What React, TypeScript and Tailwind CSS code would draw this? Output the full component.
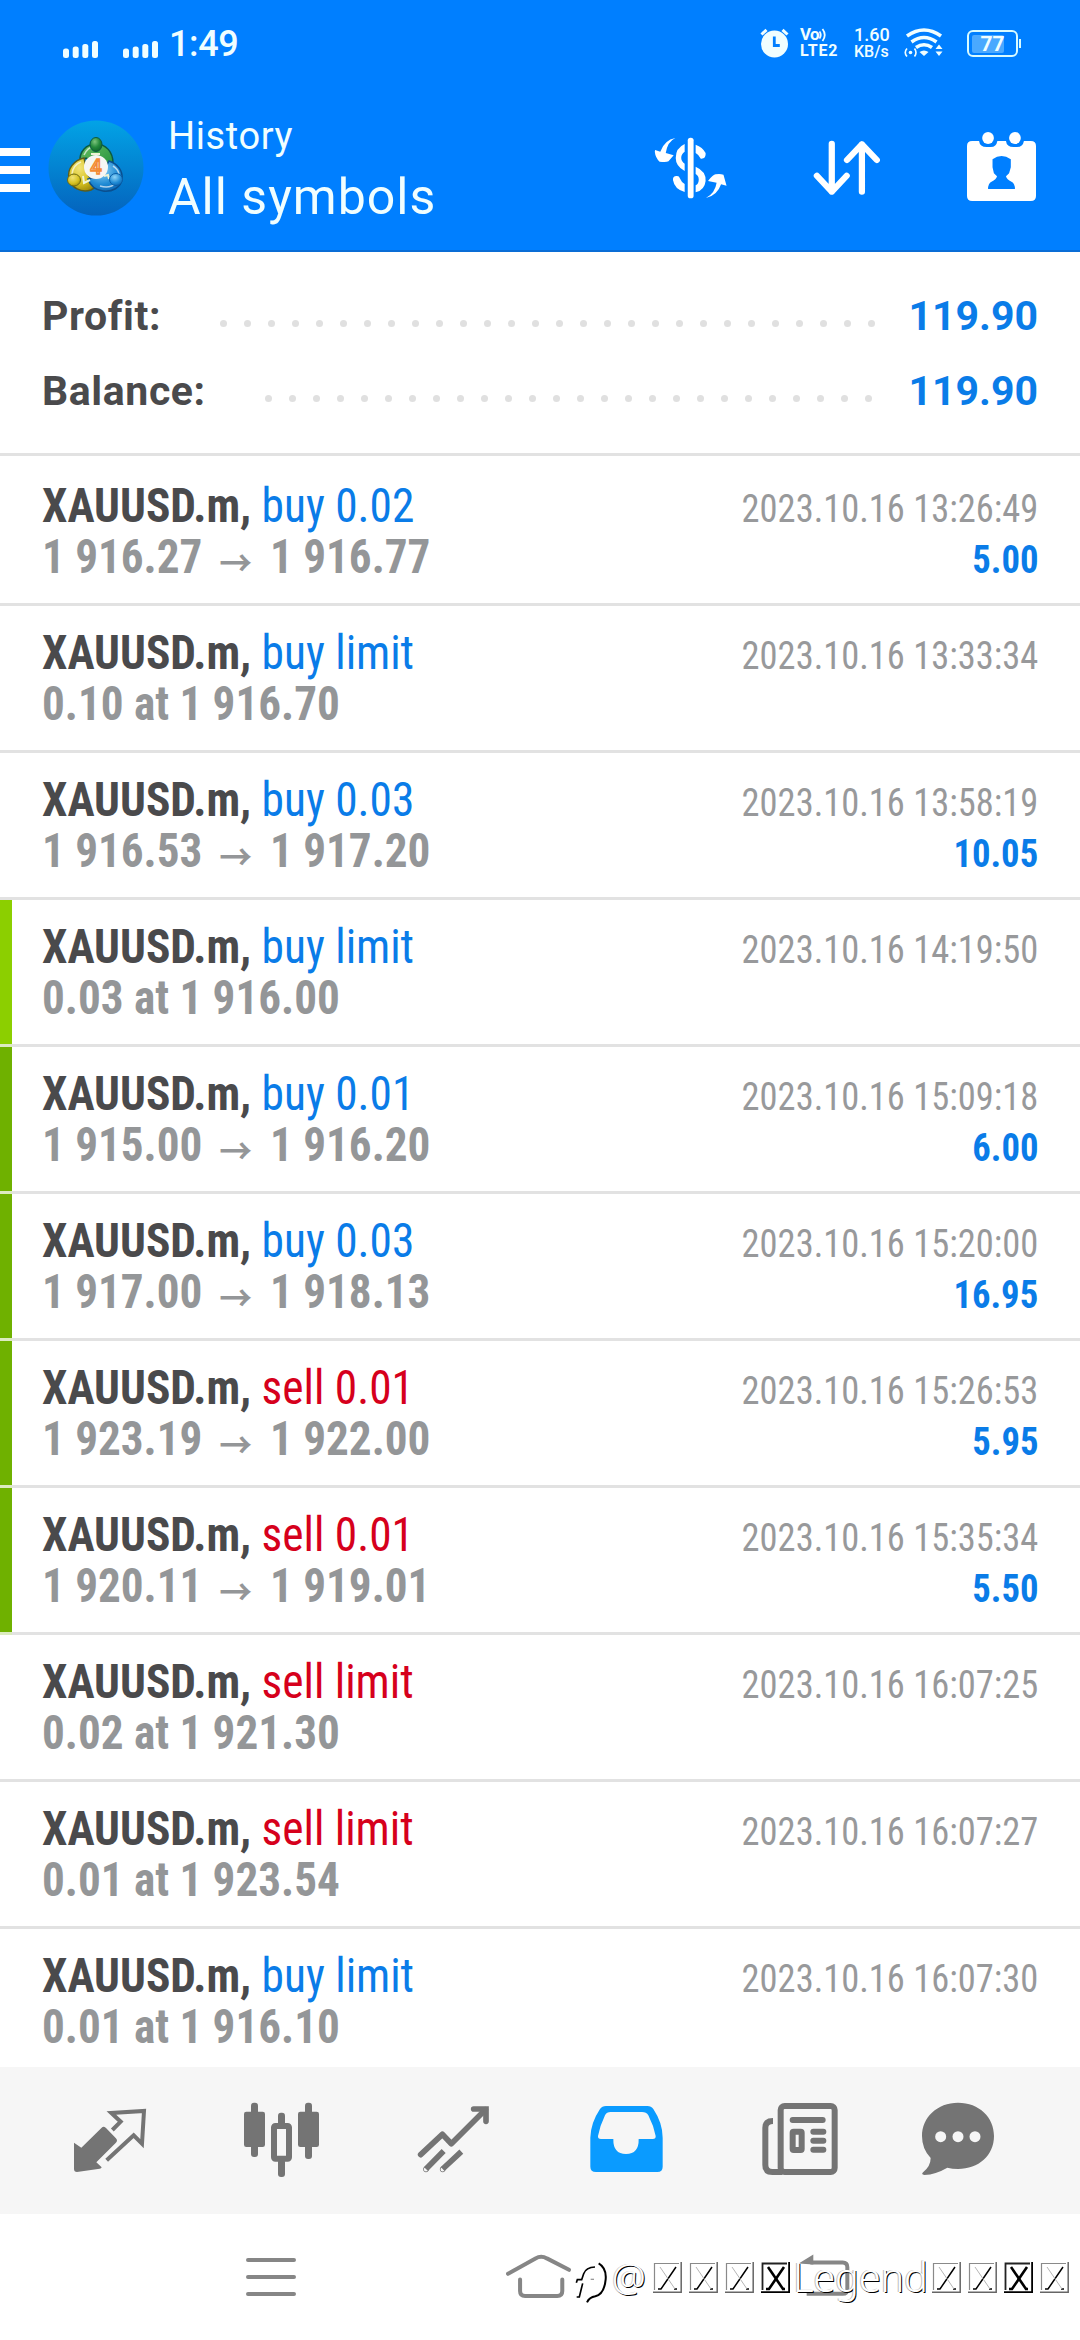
import type { ReactNode } from "react";

type Deal = {
    side: "buy" | "sell";
    volume: string;
    open?: string;
    close?: string;
    order?: string;
    time: string;
    profit?: string;
    bar?: "light" | "dark";
};

const DEALS: Deal[] = [
    { side: "buy", volume: "0.02", open: "1 916.27", close: "1 916.77", time: "2023.10.16 13:26:49", profit: "5.00" },
    { side: "buy", volume: "limit", order: "0.10 at 1 916.70", time: "2023.10.16 13:33:34" },
    { side: "buy", volume: "0.03", open: "1 916.53", close: "1 917.20", time: "2023.10.16 13:58:19", profit: "10.05" },
    { side: "buy", volume: "limit", order: "0.03 at 1 916.00", time: "2023.10.16 14:19:50", bar: "light" },
    { side: "buy", volume: "0.01", open: "1 915.00", close: "1 916.20", time: "2023.10.16 15:09:18", profit: "6.00", bar: "dark" },
    { side: "buy", volume: "0.03", open: "1 917.00", close: "1 918.13", time: "2023.10.16 15:20:00", profit: "16.95", bar: "dark" },
    { side: "sell", volume: "0.01", open: "1 923.19", close: "1 922.00", time: "2023.10.16 15:26:53", profit: "5.95", bar: "dark" },
    { side: "sell", volume: "0.01", open: "1 920.11", close: "1 919.01", time: "2023.10.16 15:35:34", profit: "5.50", bar: "dark" },
    { side: "sell", volume: "limit", order: "0.02 at 1 921.30", time: "2023.10.16 16:07:25" },
    { side: "sell", volume: "limit", order: "0.01 at 1 923.54", time: "2023.10.16 16:07:27" },
    { side: "buy", volume: "limit", order: "0.01 at 1 916.10", time: "2023.10.16 16:07:30" },
];

const Signal = () => (
    <svg viewBox="0 0 36 17" className="h-[17px] w-[36px]" fill="#f0feff">
        <rect x="0" y="7.5" width="6" height="9.5" rx="2.5" />
        <rect x="9.7" y="5.5" width="6" height="11.5" rx="2.5" />
        <rect x="19.3" y="3" width="6" height="14" rx="2.5" />
        <rect x="29" y="0" width="6" height="17" rx="2.5" />
    </svg>
);

const StatusBar = () => (
    <div className="flex h-[86px] items-start text-[#f0feff]">
        <div className="flex w-[760px] items-start pl-[63px]">
            <div className="mt-[41px] flex gap-[24px]">
                <Signal />
                <Signal />
            </div>
            <span className="mt-[22px] ml-[10px] text-[36px] leading-[44px] font-medium tracking-[-0.4px]">1:49</span>
        </div>
        <svg viewBox="0 0 29 30" className="mt-[28px] h-[30px] w-[29px]" fill="none">
            <circle cx="14.5" cy="16" r="13.5" fill="#f0feff" />
            <path d="M1.5 6.5 6.5 1.8M27.5 6.5 22.5 1.8" stroke="#f0feff" strokeWidth="3" />
            <path d="M14.3 8.5v9h5.5" stroke="#007fff" strokeWidth="2.8" />
        </svg>
        <div className="mt-[26px] ml-[11px] w-[54px] font-bold">
            <div className="flex h-[17px] items-center">
                <span className="text-[17px] tracking-[-0.7px]">Vo</span>
                <svg viewBox="0 0 8 14" className="h-[14px] w-[8px]" fill="none" stroke="#f0feff" strokeWidth="1.8">
                    <path d="M.5 3.5q2.5 3.5 0 7M3.5 1q4.5 6 0 12" />
                </svg>
            </div>
            <div className="text-[16px] leading-[16px] tracking-[0.8px]">LTE2</div>
        </div>
        <div className="mt-[26px] w-[50px] font-medium">
            <div className="text-[18px] leading-[17px]">1.60</div>
            <div className="text-[16px] leading-[17px]">KB/s</div>
        </div>
        <svg viewBox="0 0 39 29" className="mt-[28px] h-[29px] w-[39px]" fill="none" stroke="#f0feff">
            <path d="M3 8Q20 -4 37 8M7.5 14Q20 5 32.5 14M12 19.5q8-5.500 16 0" strokeWidth="3.6" />
            <path d="m15.500 24 4.500 4 4.500-4q-4.500-3-9 0zM31.500 21l3.500-4.500 3.500 4.500zM31.500 23.500l3.500 4.500 3.500-4.500z" fill="#f0feff" stroke="none" />
            <circle cx="6.500" cy="24.500" r="1.800" fill="#f0feff" stroke="none" />
            <path d="M3 20.500q-3.500 4 0 8M10.500 20.500q3 4 0 8" strokeWidth="1.600" />
        </svg>
        <div className="relative mt-[30px] ml-[24px] flex h-[27px] w-[51px] items-center rounded-[6px] border-2 border-[#d8fbff] px-[3px]">
            <div className="h-[18px] w-[32px] rounded-[2px] bg-[#4aa9ff]" />
            <span className="absolute inset-0 text-center text-[21px] leading-[24px] font-bold">77</span>
            <div className="absolute top-[7px] -right-[5px] h-[9px] w-[2px] bg-[#d8fbff]" />
        </div>
    </div>
);

const Logo = () => (
    <svg viewBox="0 0 96 96" className="h-[96px] w-[96px]">
        <defs>
            <linearGradient id="disc" x1="0" y1="0" x2="0" y2="1">
                <stop offset="0" stopColor="#02a3e6" />
                <stop offset="1" stopColor="#0463bd" />
            </linearGradient>
            <radialGradient id="green" cx=".4" cy=".3" r=".8">
                <stop offset="0" stopColor="#7cc47c" />
                <stop offset=".5" stopColor="#258a3c" />
                <stop offset="1" stopColor="#0b5c26" />
            </radialGradient>
            <linearGradient id="greenBody" x1="0" y1="0" x2="1" y2="1">
                <stop offset="0" stopColor="#66bd62" />
                <stop offset="1" stopColor="#1f8f3a" />
            </linearGradient>
            <radialGradient id="gold" cx=".4" cy=".3" r=".8">
                <stop offset="0" stopColor="#f1e377" />
                <stop offset=".6" stopColor="#d6c11f" />
                <stop offset="1" stopColor="#93800a" />
            </radialGradient>
            <radialGradient id="azure" cx=".4" cy=".3" r=".8">
                <stop offset="0" stopColor="#8fd4f7" />
                <stop offset=".6" stopColor="#1f8ad4" />
                <stop offset="1" stopColor="#0b62ae" />
            </radialGradient>
        </defs>
        <circle cx="48" cy="48" r="47.500" fill="url(#disc)" />
        <path d="M32 42c-1-10 6-18 16-18s17 8 17 19l-5 8-10-8-12-5z" fill="url(#greenBody)" stroke="#0c5a42" strokeWidth="1.500" />
        <path d="M36 38c-10 2-17 11-15 20 2 10 12 15 22 12l5-3-8-12z" fill="url(#gold)" stroke="#5c5d1c" strokeWidth="1.500" />
        <path d="M61 41c9 3 14 10 13 18-1 9-10 13-19 12-8-1-13-6-15-12l13-3z" fill="url(#azure)" stroke="#0a4f8f" strokeWidth="1.500" />
        <path d="M36 35q4-8 9-8M24 54q1-9 9-12M52 66q10 3 16-3M65 46q5 3 6 8" fill="none" stroke="#fff" strokeOpacity=".65" strokeWidth="1.500" />
        <path d="m35 56 1 7 6-3M56 56l4-1 1 4M43 34h9" fill="none" stroke="#eef3d5" strokeWidth="2" />
        <ellipse cx="48" cy="24.500" rx="6" ry="7" fill="url(#green)" stroke="#0c5a42" />
        <ellipse cx="26" cy="60" rx="6.500" ry="6" fill="url(#gold)" stroke="#6f6a12" />
        <ellipse cx="68" cy="59.500" rx="6.500" ry="6" fill="url(#azure)" stroke="#0a5ea8" />
        <circle cx="48" cy="47" r="12" fill="#f6f6f4" />
        <text x="48" y="54" textAnchor="middle" fontSize="20" fontWeight="500" fill="none" stroke="#f38b34" strokeWidth="1.600">
            4
        </text>
    </svg>
);

const AppBar = () => (
    <header className="flex h-[166px] border-b-2 border-[#0a6dd6]">
        <div className="mt-[62px] flex w-[30px] flex-col gap-[10px]">
            <div className="h-[8px] bg-white" />
            <div className="h-[8px] bg-white" />
            <div className="h-[8px] bg-white" />
        </div>
        <div className="mt-[34px] ml-[18px] w-[96px]">
            <Logo />
        </div>
        <div className="ml-[24px] w-[483px] text-[#f0feff]">
            <div className="mt-[26px] text-[38px] leading-[48px] tracking-[0.6px]">History</div>
            <div className="mt-[7px] text-[50px] leading-[60px] tracking-[1px]">All symbols</div>
        </div>
        {/* deposit / withdrawal, sort, period */}
        <svg viewBox="320 396 230 210" preserveAspectRatio="none" className="mt-[46px] h-[70px] w-[79px]" fill="#fff">
            <rect x="427" y="413" width="17" height="182" rx="8" />
            <path d="M418 432v23q-10 7-10 18t10 18v22q-26-14-26-39 0-30 26-42zM450 434q20 7 29 25 2 18-14 17-7-13-15-17zM450 500q31 14 29 43-3 28-29 34v-21q9-5 9-17t-9-17zM384 540q-1-13 12-12 6 0 8 7 4 11 14 17v24q-30-9-34-36z" />
            <path d="M391 414q-23 11-28 45l23 7-15 18q-6 3-26 1-12-12-14-30l1-5 15 5q12-35 44-41zM480 594q27-16 31-46l-25-5q15-20 22-20 12-3 23 1l9 33-16-4q-11 34-44 41z" />
        </svg>
        <svg viewBox="785 396 205 210" preserveAspectRatio="none" className="mt-[46px] ml-[81px] h-[70px] w-[71px]" fill="none" stroke="#fff" strokeWidth="18" strokeLinecap="round" strokeLinejoin="round">
            <path d="M845 431v144M802 527l43 48 43-48M932 575V433M889 480l43-47 43 47" />
        </svg>
        <svg viewBox="1237 390 200 216" preserveAspectRatio="none" className="mt-[44px] ml-[85px] h-[72px] w-[69px]">
            <path d="M1252 423h20q2 18 22 18h12q16 0 19-18h25q2 18 22 18h10q17 0 20-18h20q15 0 15 15v150q0 15-15 15h-170q-15 0-15-15V438q0-15 15-15z" fill="#fff" />
            <ellipse cx="1298" cy="414" rx="17" ry="18" fill="#fff" />
            <ellipse cx="1376" cy="414" rx="17" ry="18" fill="#fff" />
            <path d="M1311 478q26-20 53 0v24l-5 18-9 9q2 10 16 16 10 5 10 22h-78q0-17 10-22 14-6 16-16l-9-9-4-18z" fill="#007fff" />
        </svg>
    </header>
);

const SummaryRow = ({ label, value, children }: { label: string; value: string; children: ReactNode }) => (
    <div className="flex h-[75px] justify-between pr-[42px] pl-[42px] text-[41px] leading-[50px] font-bold">
        <span className="tracking-[0.6px] text-[#4a4a4c]">{label}</span>
        <div className="flex">
            {children}
            <span className="w-[131px] text-right text-[#0a7ce8]">{value}</span>
        </div>
    </div>
);

const Dots = ({ count }: { count: number }) => (
    <div className="mt-[29px] flex h-[7px] gap-[17px]">
        {Array.from({ length: count }, (_, i) => (
            <div key={i} className="h-[7px] w-[7px] rounded-full bg-[#e0e0e0]" />
        ))}
    </div>
);

const DealRow = ({ deal }: { deal: Deal }) => (
    <div className="flex h-[147px] shrink-0">
        <div className="flex w-[12px] flex-col">
            <div className={`h-[144px] ${deal.bar === "light" ? "bg-[#8ccf00]" : deal.bar === "dark" ? "bg-[#6fb100]" : ""}`} />
            <div className={`h-[3px] ${deal.bar ? "bg-[#dcebc0]" : "bg-[#e2e2e2]"}`} />
        </div>
        <div className="flex-1 border-b-[3px] border-[#e2e2e2] pt-[21px] pr-[42px] pl-[30px] font-['Roboto_Condensed']">
            <div className="flex h-[51px] items-baseline justify-between leading-[51px]">
                <div className="origin-left scale-x-[0.945] text-[48px]">
                    <span className="font-bold text-[#4a4a4c]">XAUUSD.m,</span>{" "}
                    <span className={deal.side === "buy" ? "text-[#0a7ce8]" : "text-[#d6001c]"}>
                        {deal.side} {deal.volume}
                    </span>
                </div>
                <span className="origin-right scale-x-[0.935] text-[39px] text-[#98999b]">{deal.time}</span>
            </div>
            <div className="flex h-[51px] items-baseline justify-between leading-[51px] font-bold">
                <div className="flex origin-left scale-x-[0.94] items-baseline text-[48px] text-[#949698]">
                    {deal.order ?? (
                        <>
                            <span>{deal.open}</span>
                            <span className="relative top-[3px] mr-[19px] ml-[18px] font-['Noto_Sans_CJK_JP'] text-[35px] leading-[40px]">→</span>
                            <span>{deal.close}</span>
                        </>
                    )}
                </div>
                <span className="origin-right scale-x-[0.94] text-[39px] text-[#0a7ce8]">{deal.profit}</span>
            </div>
        </div>
    </div>
);

const TabBar = () => (
    <nav className="flex h-[147px] bg-[#f6f6f6] pl-[24px]">
        <svg viewBox="72 21 516 441" className="h-[147px] w-[172px]" fill="#747474">
            <path d="M310 200q4 0 8 4l29 30q8 7 0 15l-58 58 16 15q-1 4-6 4l-68 10q-9 0-9-9v-79l22 15 61-60q3-3 5-3z" />
            <path d="m337 210 25-25-28-26 98-6-6 98-25-25-81 75" fill="none" stroke="#747474" strokeWidth="12" />
        </svg>
        <svg viewBox="588 21 516 441" className="h-[147px] w-[172px]" fill="#747474">
            <rect x="732" y="155" width="63" height="106" rx="7" />
            <rect x="753" y="128" width="21" height="163" rx="9" />
            <rect x="894" y="155" width="63" height="106" rx="7" />
            <rect x="915" y="128" width="21" height="169" rx="9" />
            <rect x="834" y="158" width="21" height="40" rx="9" />
            <rect x="834" y="296" width="21" height="55" rx="9" />
            <rect x="822" y="198" width="45" height="98" rx="4" fill="none" stroke="#747474" strokeWidth="18" />
        </svg>
        <svg viewBox="24 21 516 441" className="h-[147px] w-[172px]" fill="none" stroke="#747474" strokeWidth="17">
            <path d="m182 284 65-61 27 28 102-102" strokeLinecap="round" strokeLinejoin="round" />
            <path d="M341 147h37v37" strokeLinecap="round" />
            <path d="m251 273-53 54M304 275l-56 52" />
            <circle cx="198" cy="328" r="1" strokeWidth="15" />
            <circle cx="248" cy="328" r="1" strokeWidth="15" />
        </svg>
        <svg viewBox="540 21 516 441" className="h-[147px] w-[172px]">
            <path d="M738 138h124q12 0 18 9 28 42 28 86v87q0 16-16 16H708q-17 0-17-16v-87q1-44 29-86 6-9 18-9z" fill="#0a9bff" />
            <path d="M752 156h94q13 0 19 10 16 31 22 62 1 9-9 9h-42q1 45-38 45t-38-45h-37q-10 0-9-9 6-31 21-62 5-10 17-10z" fill="#f6f6f6" />
        </svg>
        <svg viewBox="-24 21 516 441" className="h-[147px] w-[172px]" fill="none" stroke="#747474" strokeWidth="18">
            <rect x="182" y="138" width="162" height="198" rx="12" />
            <path d="M159 183q-23 0-23 20v112q0 21 21 21h30" />
            <path d="M218 180h90M280 215h30M280 242h30M280 269h30" strokeLinecap="round" />
            <rect x="218" y="215" width="27" height="55" rx="3" />
        </svg>
        <svg viewBox="492 21 516 441" className="h-[147px] w-[172px]">
            <path d="M714 128c64 0 108 44 108 100 0 58-46 99-108 99q-17 0-32-4-34 20-69 22-11-2-3-9 22-18 22-42-26-27-26-66c0-56 46-100 108-100z" fill="#747474" />
            <g fill="#f6f6f6">
                <circle cx="662" cy="230" r="16.500" />
                <circle cx="714" cy="230" r="16.500" />
                <circle cx="765" cy="230" r="16.500" />
            </g>
        </svg>
    </nav>
);

// Box with a cross, shown by the watermark where its font has no glyph.
const MissingGlyph = ({ heavy = false }: { heavy?: boolean }) => (
    <svg viewBox="0 0 29 31" className="h-[31px] w-[29px] shrink-0" fill="none">
        <path d="M1 1h27v29H1z" fill="#fff" />
        <path d="M1.500 28V1.500H26" stroke={heavy ? "#222" : "#8a8a8a"} strokeWidth={heavy ? 1.800 : 1.200} />
        <path d="M0 30.200h28.200V0" stroke={heavy ? "#000" : "#666"} strokeWidth={heavy ? 2 : 1.500} />
        <path d="M5 27h3L23 5M21 27h3" stroke="#000" strokeWidth={heavy ? 2.600 : 1.500} />
        <path d="M7 5 22 27" stroke={heavy ? "#000" : "#b5b5b5"} strokeWidth={heavy ? 2.600 : 1} />
    </svg>
);

const Watermark = () => (
    <div className="absolute top-[45px] left-[575px] flex h-[36px] items-start font-['Noto_Sans']">
        <svg viewBox="645 597 96 132" className="h-[44px] w-[32px] shrink-0" fill="none">
            <path d="M650 664h18l-11 46" stroke="#fff" strokeWidth="16" />
            <path d="M716 610q24 14 21 48-4 44-31 51-18 3-25 18" stroke="#000" strokeWidth="6" />
            <path d="M705 621q-27 1-34 20l-6 18h-13l-3 9M668 670l-10 41h-8" stroke="#000" strokeWidth="5" />
            <path d="M692 658h10" stroke="#999" strokeWidth="4" />
        </svg>
        <span className="ml-[5px] w-[41px] text-[38px] leading-[36px] font-light text-white [text-shadow:1px_1px_0_#000,-1px_0_0_#ccc]">@</span>
        <div className="mt-[3px] flex gap-[7px]">
            <MissingGlyph />
            <MissingGlyph />
            <MissingGlyph />
            <MissingGlyph heavy />
        </div>
        <span className="ml-[3px] w-[139px] text-[40px] leading-[36px] font-light tracking-[-0.3px] text-white [text-shadow:1px_1px_0_#000,-1px_0_0_#bbb]">Legend</span>
        <div className="mt-[3px] flex gap-[7px]">
            <MissingGlyph />
            <MissingGlyph />
            <MissingGlyph heavy />
            <MissingGlyph />
        </div>
    </div>
);

const SystemNav = () => (
    <div className="relative flex h-[126px] bg-white pl-[246px]">
        <svg viewBox="0 0 50 40" className="mt-[43px] h-[40px] w-[50px]" stroke="#868686" strokeWidth="4" strokeLinecap="round">
            <path d="M2 3h46M2 20h46M2 37h46" />
        </svg>
        <svg viewBox="438 580 200 140" className="mt-[39px] ml-[210px] h-[47px] w-[67px]" fill="none" stroke="#868686" strokeWidth="12" strokeLinecap="round" strokeLinejoin="round">
            <path d="m444 642 82-46q17-10 34 0l66 34M480 659v34q0 15 15 15h96q15 0 15-15v-34" />
        </svg>
        <svg viewBox="230 580 165 140" className="mt-[39px] ml-[224px] h-[47px] w-[55px]" fill="none" stroke="#868686" strokeWidth="12">
            <path d="M270 608h97q14 0 14 14v66q0 14-14 14H259" />
            <path d="m235 611 44-27v30z" fill="#868686" stroke="none" />
        </svg>
        <Watermark />
    </div>
);

export default function App() {
    return (
        <div className="flex h-[2340px] w-[1080px] flex-col overflow-hidden bg-white font-['Roboto',sans-serif]">
            <div className="h-[252px] shrink-0 bg-[#007fff]">
                <StatusBar />
                <AppBar />
            </div>
            <section className="h-[204px] shrink-0 border-b-[3px] border-[#e2e2e2] pt-[39px]">
                <SummaryRow label="Profit:" value="119.90">
                    <div className="mr-[32px]">
                        <Dots count={28} />
                    </div>
                </SummaryRow>
                <SummaryRow label="Balance:" value="119.90">
                    <div className="mr-[35px]">
                        <Dots count={26} />
                    </div>
                </SummaryRow>
            </section>
            <main className="flex h-[1611px] shrink-0 flex-col overflow-hidden pt-[3px]">
                {DEALS.map((deal) => (
                    <DealRow key={deal.time} deal={deal} />
                ))}
            </main>
            <TabBar />
            <SystemNav />
        </div>
    );
}
